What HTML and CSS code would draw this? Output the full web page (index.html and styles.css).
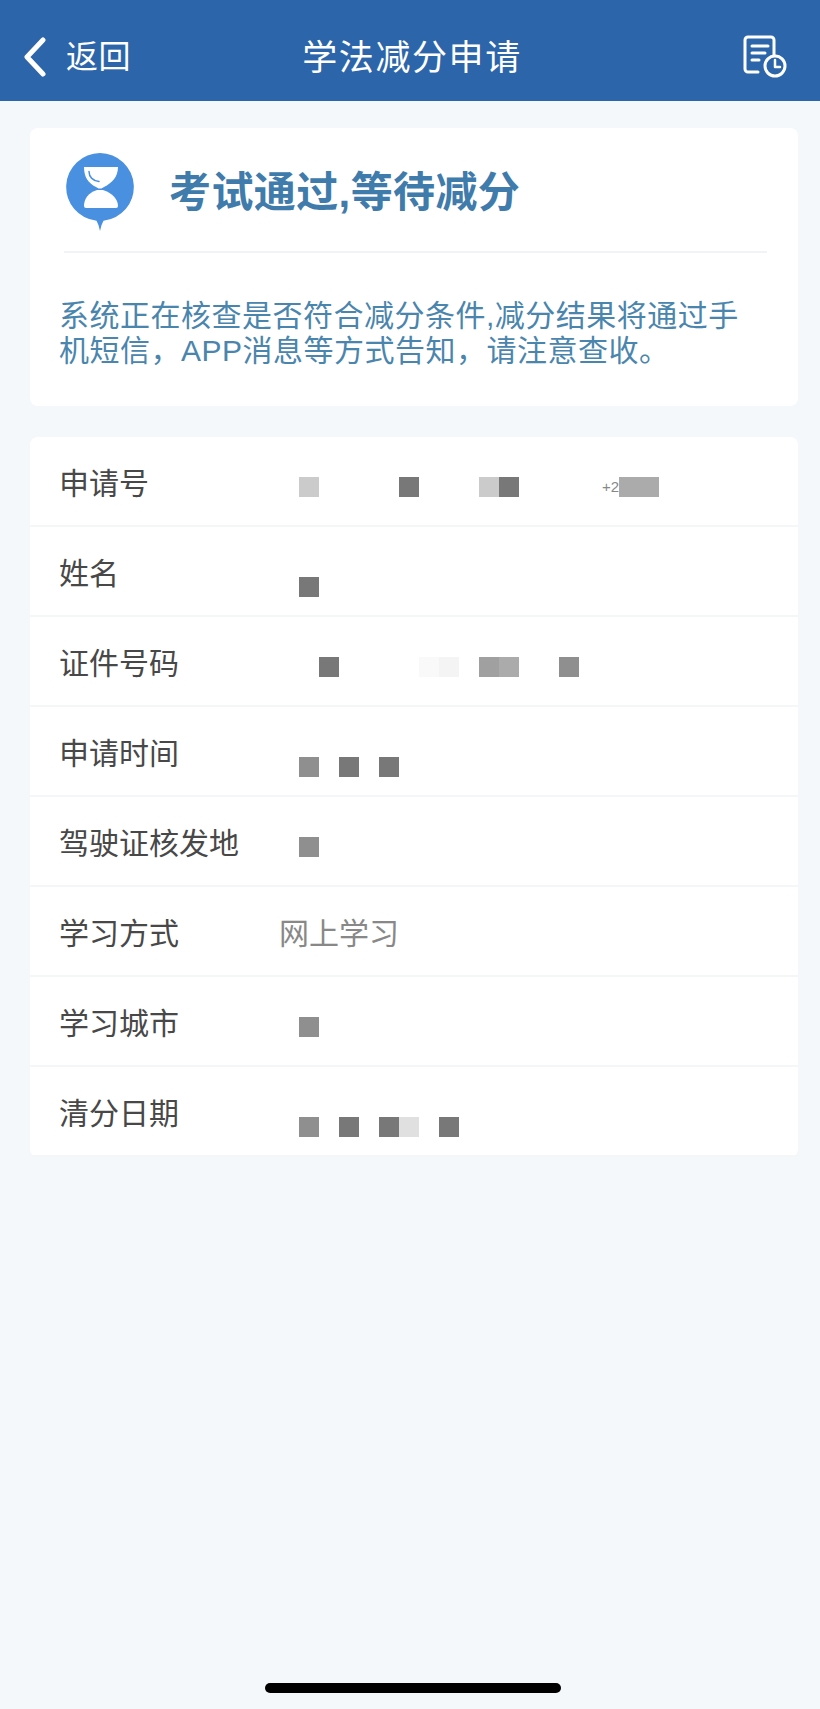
FILE: index.html
```html
<!DOCTYPE html>
<html lang="zh-CN">
<head>
    <meta charset="UTF-8">
    <meta name="viewport" content="width=device-width, initial-scale=1.0">
    <title>学法减分申请</title>
    <link rel="stylesheet" href="styles.css">
</head>
<body>
    <div class="page">
        <header class="nav-bar">
            <div class="nav-back">
                <svg class="back-icon" width="24" height="40" viewBox="0 0 24 40">
                    <path d="M20 3 L4 20 L20 37" fill="none" stroke="#fff" stroke-width="5" stroke-linecap="round" stroke-linejoin="round"/>
                </svg>
                <span>返回</span>
            </div>
            <h1 class="nav-title">学法减分申请</h1>
            <svg class="record-icon" width="44" height="44" viewBox="0 0 44 44">
                <path d="M15 37 H5 a3 3 0 0 1 -3 -3 V5 a3 3 0 0 1 3 -3 H28 a3 3 0 0 1 3 3 V20" fill="none" stroke="#fff" stroke-width="3" stroke-linecap="round"/>
                <path d="M9 11 H25 M9 18 H22 M9 25 H16" fill="none" stroke="#fff" stroke-width="3" stroke-linecap="round"/>
                <circle cx="32" cy="31" r="10" fill="none" stroke="#fff" stroke-width="3"/>
                <path d="M32 25 V32 H37" fill="none" stroke="#fff" stroke-width="2.5" stroke-linecap="round" stroke-linejoin="round"/>
            </svg>
        </header>

        <section class="card status-card">
            <div class="status-head">
                <svg class="status-icon" width="68" height="78" viewBox="0 0 68 78">
                    <path d="M34 0 a34 34 0 0 1 3.500 67.800 Q35 72 34 78 Q33 72 30.500 67.800 A34 34 0 0 1 34 0 Z" fill="#4a90e0"/>
                    <path d="M18 14 H52 C52 24 46 30 38 34 L35.500 35.500 H32.500 L30 34 C22 30 18 24 18 14 Z" fill="#fff"/>
                    <path d="M31 37 H37 C46 40 52 46 52 53 a2 2 0 0 1 -2 2 H20 a2 2 0 0 1 -2 -2 C18 46 22 40 31 37 Z" fill="#fff"/>
                    <path d="M23 18.500 C23 24 27 28 33 28.500" fill="none" stroke="#4a90e0" stroke-width="1.500" stroke-linecap="round"/>
                </svg>
                <h2 class="status-title">考试通过,等待减分</h2>
            </div>
            <p class="status-text">系统正在核查是否符合减分条件,减分结果将通过手机短信，APP消息等方式告知，请注意查收。</p>
        </section>

        <section class="card info-card">
            <div class="info-row">
                <span class="info-label">申请号</span>
                <div class="mosaic">
                    <i class="t-light"></i><i></i><i></i><i></i><i></i><i class="t-dark"></i><i></i><i></i><i></i><i class="t-light"></i><i class="t-dark"></i><i></i><i></i><i></i><i></i><i class="leftover">+2</i><i class="t-pale"></i><i class="t-pale"></i>
                </div>
            </div>
            <div class="info-row">
                <span class="info-label">姓名</span>
                <div class="mosaic low"><i class="t-dark"></i></div>
            </div>
            <div class="info-row">
                <span class="info-label">证件号码</span>
                <div class="mosaic">
                    <i></i><i class="t-dark"></i><i></i><i></i><i></i><i></i><i class="t-ghost"></i><i class="t-faint"></i><i></i><i class="t-mid2"></i><i class="t-pale"></i><i></i><i></i><i class="t-mid"></i>
                </div>
            </div>
            <div class="info-row">
                <span class="info-label">申请时间</span>
                <div class="mosaic low"><i class="t-mid"></i><i></i><i class="t-dark"></i><i></i><i class="t-dark"></i></div>
            </div>
            <div class="info-row">
                <span class="info-label">驾驶证核发地</span>
                <div class="mosaic"><i class="t-mid"></i></div>
            </div>
            <div class="info-row">
                <span class="info-label">学习方式</span>
                <span class="info-value">网上学习</span>
            </div>
            <div class="info-row">
                <span class="info-label">学习城市</span>
                <div class="mosaic"><i class="t-mid"></i></div>
            </div>
            <div class="info-row">
                <span class="info-label">清分日期</span>
                <div class="mosaic low"><i class="t-mid"></i><i></i><i class="t-dark"></i><i></i><i class="t-dark"></i><i class="t-soft"></i><i></i><i class="t-dark"></i></div>
            </div>
        </section>

        <div class="home-indicator"></div>
    </div>
</body>
</html>
```

FILE: styles.css
```css
/* Reset and Base Styles */
* {
    margin: 0;
    padding: 0;
    box-sizing: border-box;
}

body {
    font-family: "Liberation Sans", "Noto Sans CJK SC", sans-serif;
    background-color: #f5f8fa;
}

.page {
    display: flex;
    flex-direction: column;
    height: 1709px;
    overflow: hidden;
}

/* Nav bar */
.nav-bar {
    display: flex;
    align-items: center;
    justify-content: space-between;
    height: 101px;
    padding: 7px 16px 0 23px;
    background-color: #2c65a9;
    color: #fff;
}

.nav-back {
    display: flex;
    align-items: center;
    gap: 19px;
    width: 240px;
    font-size: 32px;
    letter-spacing: 0.5px;
}

.back-icon {
    margin-top: 6px;
}

.nav-title {
    margin-left: 6px;
    font-size: 35px;
    font-weight: 400;
    letter-spacing: 1.6px;
}

.record-icon {
    margin: 6px 17px 0 188px;
}

/* Cards */
.card {
    margin: 0 22px 0 30px;
    background-color: #fff;
    border-radius: 8px;
}

.status-card {
    height: 278px;
    margin-top: 27px;
    padding: 0 30px;
}

.status-head {
    display: flex;
    align-items: flex-start;
    gap: 35px;
    height: 125px;
    padding: 25px 0 0 2px;
    margin: 0 1px 0 4px;
    border-bottom: 2px solid #f1f3f5;
}

.status-title {
    margin-top: 12px;
    font-size: 42px;
    font-weight: 700;
    line-height: 56px;
    letter-spacing: 0.4px;
    color: #3f7bab;
}

.status-text {
    margin: 45px 10px 0 -1px;
    font-size: 30px;
    line-height: 35px;
    color: #4a85ad;
    letter-spacing: 0.5px;
}

.info-card {
    margin-top: 31px;
}

.info-row {
    display: flex;
    height: 90px;
    padding-left: 29px;
    border-bottom: 2px solid #f5f6f8;
}

.info-label {
    width: 220px;
    font-size: 30px;
    line-height: 94px;
    color: #484848;
}

.info-value {
    font-size: 30px;
    line-height: 94px;
    color: #888;
}

/* Redacted values */
.mosaic {
    display: flex;
    margin: 40px 0 0 20px;
}

.mosaic.low {
    margin-top: 50px;
}

.mosaic i {
    display: block;
    width: 20px;
    height: 20px;
}

.mosaic .leftover {
    font-size: 15px;
    font-style: normal;
    line-height: 20px;
    text-align: right;
    color: #888;
}

.t-dark { background-color: #787878; }
.t-mid { background-color: #8f8f8f; }
.t-mid2 { background-color: #a0a0a0; }
.t-pale { background-color: #ababab; }
.t-light { background-color: #cbcbcb; }
.t-soft { background-color: #e0e0e0; }
.t-faint { background-color: #f4f4f4; }
.t-ghost { background-color: #f9f9f9; }

.home-indicator {
    width: 296px;
    height: 10px;
    margin: auto auto 16px 265px;
    border-radius: 5px;
    background-color: #000;
}
```
